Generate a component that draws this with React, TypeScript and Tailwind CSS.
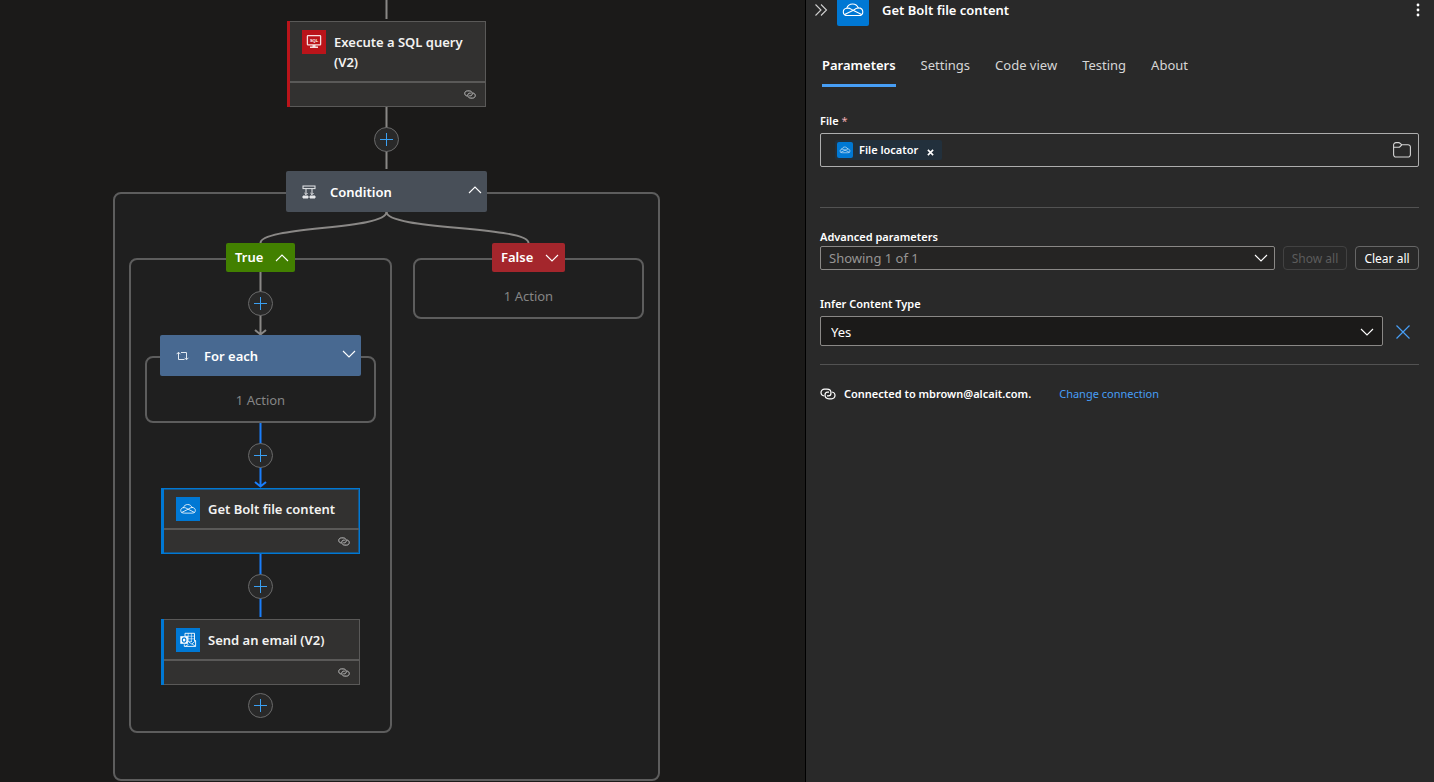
import { useState } from 'react'
import type { ReactNode } from 'react'

type IconProps = { className?: string }

function LinkIcon({ className }: IconProps) {
  const loop = 'M4.2 8C2.3 7.8 1 6.4 1 4.6C1 2.6 2.5 1.2 4.5 1.2H7C9.4 1.2 11 2.8 11 4.9C11 6.6 9.8 7.8 8.4 7.8H7'
  return (
    <svg viewBox="0 0 16 12" className={className} fill="none" stroke="currentColor" strokeWidth="1.2">
      <path d={loop} />
      <path d={loop} transform="rotate(180 8 6)" />
    </svg>
  )
}

function OneDriveIcon({ className }: IconProps) {
  return (
    <svg
      viewBox="0 0 32 32"
      className={className}
      fill="none"
      stroke="#fff"
      strokeWidth="1.1"
      strokeLinejoin="round"
      strokeLinecap="round"
    >
      <path d="M10.5 21.5C8 21.5 6.3 20 6.3 17.9C6.3 15.9 7.8 14.4 9.8 14.2C10.6 11.6 12.9 10 15.6 10C18.2 10 20.4 11.5 21.3 13.9C24 14 25.8 15.6 25.8 17.9C25.8 20 24.1 21.5 21.8 21.5Z" />
      <path d="M9.8 14.2C11.6 13.9 13 14.4 14.5 15.4L24.6 20.6" />
      <path d="M7.6 20.6L16.4 16.2C18 15 19.4 14 21.3 13.9" />
    </svg>
  )
}

function OutlookIcon({ className }: IconProps) {
  return (
    <svg viewBox="0 0 24 24" className={className} fill="none" stroke="#fff" strokeWidth="0.9">
      <path d="M9 8V5.3H18.5V13" />
      <path d="M9 8.2H18.5M12 10.8H18.5M12 13.4H16M12.2 5.3V14M15.4 5.3V14" strokeWidth="0.6" />
      <path d="M18.5 11.5L19.6 12.8V18.4H8.3V16.4" />
      <path d="M12.5 13.8L15.8 16L19.6 12.8M12.5 16.4L9.5 18.2M16 15.8L19.4 18.3" strokeWidth="0.8" />
      <rect x="4.3" y="8.2" width="7.6" height="7.6" fill="#fff" stroke="none" />
      <ellipse cx="8.1" cy="12" rx="1.8" ry="2.1" stroke="#0078d4" strokeWidth="1.1" />
    </svg>
  )
}

function SqlIcon({ className }: IconProps) {
  return (
    <svg viewBox="0 0 24 24" className={className}>
      <rect x="5.4" y="5.6" width="13.2" height="9.2" rx="0.6" fill="none" stroke="#f7dfe0" strokeWidth="1.3" />
      <text x="12" y="11.8" fill="#fff" fontSize="4" fontWeight="700" textAnchor="middle" fontFamily="Liberation Sans">
        SQL
      </text>
      <path d="M10.5 15h3v1.6h2.5v1.4h-8v-1.4h2.5z" fill="#f7dfe0" />
    </svg>
  )
}

function ConditionIcon({ className }: IconProps) {
  return (
    <svg viewBox="0 0 14 14" className={className} fill="none" stroke="#e6e8ea" strokeWidth="1">
      <rect x="1" y="1" width="12" height="2.6" />
      <path d="M4 3.6V9.6M10 3.6V9.6M2.4 8L4 9.6L5.6 8M8.4 8L10 9.6L11.6 8" />
      <path d="M1 11H6V13H1ZM8 11H13V13H8Z" fill="#e6e8ea" />
    </svg>
  )
}

function LoopIcon({ className }: IconProps) {
  return (
    <svg viewBox="0 0 14 14" className={className} fill="none" stroke="#e3eaf2" strokeWidth="1">
      <path d="M2.5 3.5V10.5H8.5M0.6 5.2L2.5 3.2L4.4 5.2" />
      <path d="M5 3.5H10.5V10.5M8.6 8.8L10.5 10.8L12.4 8.8" />
    </svg>
  )
}

function Chevron({ up = false, className = 'h-4 w-4' }: { up?: boolean; className?: string }) {
  return (
    <svg viewBox="0 0 16 16" className={className} fill="none" stroke="currentColor" strokeWidth="1.1">
      <path d={up ? 'M2 11L8 5L14 11' : 'M2 5L8 11L14 5'} />
    </svg>
  )
}

function PlusButton({ className }: IconProps) {
  return (
    <button
      type="button"
      aria-label="Add an action"
      className={`absolute flex h-[25px] w-[25px] items-center justify-center rounded-full border border-[#6a6a6a] bg-[#292929] ${className}`}
    >
      <svg viewBox="0 0 13 13" className="h-[13px] w-[13px]" stroke="#3aa0f3" strokeWidth="1">
        <path d="M6.5 0V13M0 6.5H13" />
      </svg>
    </button>
  )
}

type ActionCardProps = {
  title: string
  icon: ReactNode
  iconBg: string
  stripe: string
  selected?: boolean
  className: string
}

function ActionCard({ title, icon, iconBg, stripe, selected, className }: ActionCardProps) {
  return (
    <div
      className={`absolute flex w-[199px] border bg-[#323130] ${selected ? 'border-[#0078d4] ring-1 ring-[#0078d4]/50 ring-inset' : 'border-[#5a5958]'} ${className}`}
    >
      <div className={`-my-px -ml-px w-[3px] shrink-0 ${stripe}`} />
      <div className="flex min-w-0 flex-1 flex-col">
        <div className="flex flex-1 items-start gap-2 border-b-2 border-[#5a5958] pt-2 pl-3">
          <div className={`h-6 w-6 shrink-0 ${iconBg}`}>{icon}</div>
          <h3 className="pt-0.5 text-[13px] leading-5 font-semibold text-[#f3f2f1]">{title}</h3>
        </div>
        <div className="flex h-[23px] items-center justify-end pr-[9px]">
          <LinkIcon className="h-[9px] w-3 text-[#d0d0d0]" />
        </div>
      </div>
    </div>
  )
}

function ScopeHeader({ title, icon, up, className }: { title: string; icon: ReactNode; up?: boolean; className: string }) {
  return (
    <button
      type="button"
      className={`absolute flex h-[41px] w-[201px] items-center rounded-xs pr-1 pl-4 text-left ${className}`}
    >
      {icon}
      <span className="ml-3.5 flex-1 pt-0.5 text-[13px] font-semibold text-white">{title}</span>
      <span className="pb-1 text-white">
        <Chevron up={up} />
      </span>
    </button>
  )
}

function Canvas() {
  const scope = 'absolute rounded-lg border-2 border-[#5d5d5d] bg-[#1f1f1f]'
  const branch =
    'absolute flex h-[29px] items-center justify-between rounded-xs pt-px pr-[5px] pl-[9px] text-[13px] font-semibold text-white'
  return (
    <main className="relative min-w-0 flex-1 overflow-hidden bg-[#1b1a19]">
      <div className={`${scope} top-[192px] left-[113px] h-[589px] w-[547px]`} />
      <div className={`${scope} top-[258px] left-[129px] h-[475px] w-[263px]`} />
      <div className={`${scope} top-[258px] left-[413px] flex h-[61px] w-[231px] items-end justify-center pb-[11px] text-[13px] leading-5 text-[#858585]`}>
        1 Action
      </div>
      <div className={`${scope} top-[356px] left-[145px] flex h-[67px] w-[231px] items-end justify-center pb-[11px] text-[13px] leading-5 text-[#858585]`}>
        1 Action
      </div>

      {/* edges between the nodes */}
      <svg className="absolute top-0 left-0" width="806" height="782" fill="none" stroke="#8a8886" strokeWidth="2">
        <path d="M386.5 0V19M386.5 107V169" />
        <path d="M386.5 212C386.5 230 260.5 226 260.5 243" />
        <path d="M386.5 212C386.5 230 528.5 226 528.5 243" />
        <path d="M260.5 272V334M255 330L260.5 334.5L266 330" />
        <g stroke="#1a7efb">
          <path d="M260.5 423V486M255 482L260.5 486.5L266 482" />
          <path d="M260.5 554V617" />
        </g>
      </svg>

      <ActionCard
        title="Execute a SQL query (V2)"
        icon={<SqlIcon />}
        iconBg="bg-[#ba141a]"
        stripe="bg-[#ba141a]"
        className="top-[21px] left-[287px] h-[86px]"
      />
      <ScopeHeader
        title="Condition"
        icon={<ConditionIcon className="h-3.5 w-3.5" />}
        up
        className="top-[171px] left-[286px] bg-[#484f58]"
      />
      <button type="button" className={`${branch} top-[243px] left-[226px] w-[69px] bg-[#428000]`}>
        True
        <Chevron up />
      </button>
      <button type="button" className={`${branch} top-[243px] left-[492px] w-[73px] bg-[#a4262c]`}>
        False
        <Chevron />
      </button>
      <ScopeHeader
        title="For each"
        icon={<LoopIcon className="h-3.5 w-3.5" />}
        className="top-[335px] left-[160px] bg-[#486991]"
      />
      <ActionCard
        title="Get Bolt file content"
        icon={<OneDriveIcon />}
        iconBg="bg-[#0078d4]"
        stripe="bg-[#0078d4]"
        selected
        className="top-[488px] left-[161px] h-[66px]"
      />
      <ActionCard
        title="Send an email (V2)"
        icon={<OutlookIcon />}
        iconBg="bg-[#0078d4]"
        stripe="bg-[#0078d4]"
        className="top-[619px] left-[161px] h-[66px]"
      />

      <PlusButton className="top-[127px] left-[374px]" />
      <PlusButton className="top-[291px] left-[248px]" />
      <PlusButton className="top-[443px] left-[248px]" />
      <PlusButton className="top-[574px] left-[248px]" />
      <PlusButton className="top-[693px] left-[248px]" />
    </main>
  )
}

const tabs = ['Parameters', 'Settings', 'Code view', 'Testing', 'About']

function DetailsPanel() {
  const [activeTab, setActiveTab] = useState('Parameters')

  return (
    <aside className="flex w-[629px] shrink-0 flex-col border-l border-black bg-[#292929] pr-[15px] pl-3.5 text-white">
      <header className="flex h-[26px] items-start">
        <button type="button" aria-label="Collapse" className="-ml-1.5 flex h-5 w-4 items-center text-[#d0d0d0]">
          <svg viewBox="0 0 14 14" className="h-3.5 w-3.5" fill="none" stroke="currentColor" strokeWidth="1.1">
            <path d="M1.5 1.5L7 7L1.5 12.5M7 1.5L12.5 7L7 12.5" />
          </svg>
        </button>
        <div className="ml-[7px] flex h-[26px] w-8 items-end overflow-hidden rounded-b-xs bg-[#0078d4]">
          <OneDriveIcon className="h-8 w-8 shrink-0" />
        </div>
        <h2 className="ml-[13px] flex-1 text-[13px] leading-5 font-semibold">Get Bolt file content</h2>
        <button type="button" aria-label="More options" className="-mr-[7px] flex h-5 w-4 items-center justify-center">
          <svg viewBox="0 0 4 14" className="h-3.5 w-1" fill="#fff">
            <circle cx="2" cy="2" r="1.4" />
            <circle cx="2" cy="7" r="1.4" />
            <circle cx="2" cy="12" r="1.4" />
          </svg>
        </button>
      </header>

      <div role="tablist" className="mt-[27px] flex gap-[25px] pl-0.5">
        {tabs.map((tab) => (
          <button
            key={tab}
            type="button"
            role="tab"
            aria-selected={tab === activeTab}
            onClick={() => setActiveTab(tab)}
            className={`border-b-3 pt-0.5 pb-[9px] text-[13px] leading-5 ${
              tab === activeTab ? 'border-[#479ef5] font-semibold text-white' : 'border-transparent text-[#d6d6d6]'
            }`}
          >
            {tab}
          </button>
        ))}
      </div>

      <div id="file-label" className="mt-6 text-[11px] leading-5 font-semibold">
        File <span className="font-normal text-[#eeacb2]">*</span>
      </div>
      <div
        role="group"
        aria-labelledby="file-label"
        className="mt-0.5 flex h-[34px] items-center rounded-xs border border-[#adadad] pr-[7px] pl-3.5"
      >
        <span className="flex h-5 items-center rounded-xs bg-[#22303c] pr-1.5 pl-0.5 text-[11px] font-semibold">
          <OneDriveIcon className="h-4 w-4 rounded-xs bg-[#0078d4]" />
          <span className="ml-1.5">File locator</span>
          <button type="button" aria-label="Remove File locator" className="ml-1.5 flex h-4 w-3 items-center justify-center">
            <svg viewBox="0 0 8 8" className="mt-1 h-[7px] w-[7px]" stroke="#fff" strokeWidth="1.8">
              <path d="M1 1L7 7M7 1L1 7" />
            </svg>
          </button>
        </span>
        <button type="button" aria-label="Open folder" className="ml-auto text-[#d6d6d6]">
          <svg viewBox="0 0 18 16" className="h-4 w-[18px]" fill="none" stroke="currentColor" strokeWidth="1.1">
            <path d="M0.6 3A2.4 2.4 0 0 1 3 0.6H5.6C6.3 0.6 6.8 0.9 7.2 1.3L8.6 2.7H15A2.4 2.4 0 0 1 17.4 5.1V12.6A2.4 2.4 0 0 1 15 15H3A2.4 2.4 0 0 1 0.6 12.6Z" />
            <path d="M0.6 5.2H5.6C6.3 5.2 6.8 4.9 7.2 4.5L8.8 2.8" />
          </svg>
        </button>
      </div>

      <hr className="mt-10 border-[#525252]" />

      <label htmlFor="advanced" className="mt-[19px] text-[11px] leading-5 font-semibold">
        Advanced parameters
      </label>
      <div className="-mt-px flex gap-2">
        <div className="relative flex-1">
          <select
            id="advanced"
            className="block h-6 w-full appearance-none rounded-xs border border-[#8a8886] bg-[#252423] pl-2 text-[13px] leading-5 text-[#979593]"
          >
            <option>Showing 1 of 1</option>
          </select>
          <Chevron className="pointer-events-none absolute top-1 right-1.5 h-4 w-4" />
        </div>
        <button type="button" disabled className="h-6 w-16 rounded-sm border border-[#424242] pt-px text-xs text-[#5c5c5c]">
          Show all
        </button>
        <button type="button" className="h-6 w-16 rounded-sm border border-[#666666] pt-px text-xs">
          Clear all
        </button>
      </div>

      <label htmlFor="infer" className="mt-6 text-[11px] leading-5 font-semibold">
        Infer Content Type
      </label>
      <div className="mt-0.5 flex items-center">
        <div className="relative flex-1">
          <select
            id="infer"
            className="block h-[30px] w-full appearance-none rounded-xs border border-[#8a8886] bg-[#1b1a19] pt-0.5 pl-2.5 text-[13px] leading-5"
          >
            <option>Yes</option>
            <option>No</option>
          </select>
          <Chevron className="pointer-events-none absolute top-2 right-2 h-4 w-4" />
        </div>
        <button type="button" aria-label="Remove parameter" className="flex h-[30px] w-9 items-center justify-center pt-0.5 pl-1">
          <svg viewBox="0 0 14 14" className="h-3.5 w-3.5" stroke="#479ef5" strokeWidth="1.2">
            <path d="M0.5 0.5L13.5 13.5M13.5 0.5L0.5 13.5" />
          </svg>
        </button>
      </div>

      <hr className="mt-[18px] border-[#525252]" />

      <div className="mt-[19px] flex items-center text-[11px] leading-5">
        <LinkIcon className="h-3 w-4" />
        <span className="ml-2 font-semibold">Connected to mbrown@alcait.com.</span>
        <a href="#" className="ml-7 text-[#479ef5]">
          Change connection
        </a>
      </div>
    </aside>
  )
}

export default function App() {
  return (
    <div className="flex h-screen min-h-[782px] font-['Noto_Sans',sans-serif]">
      <Canvas />
      <DetailsPanel />
    </div>
  )
}
